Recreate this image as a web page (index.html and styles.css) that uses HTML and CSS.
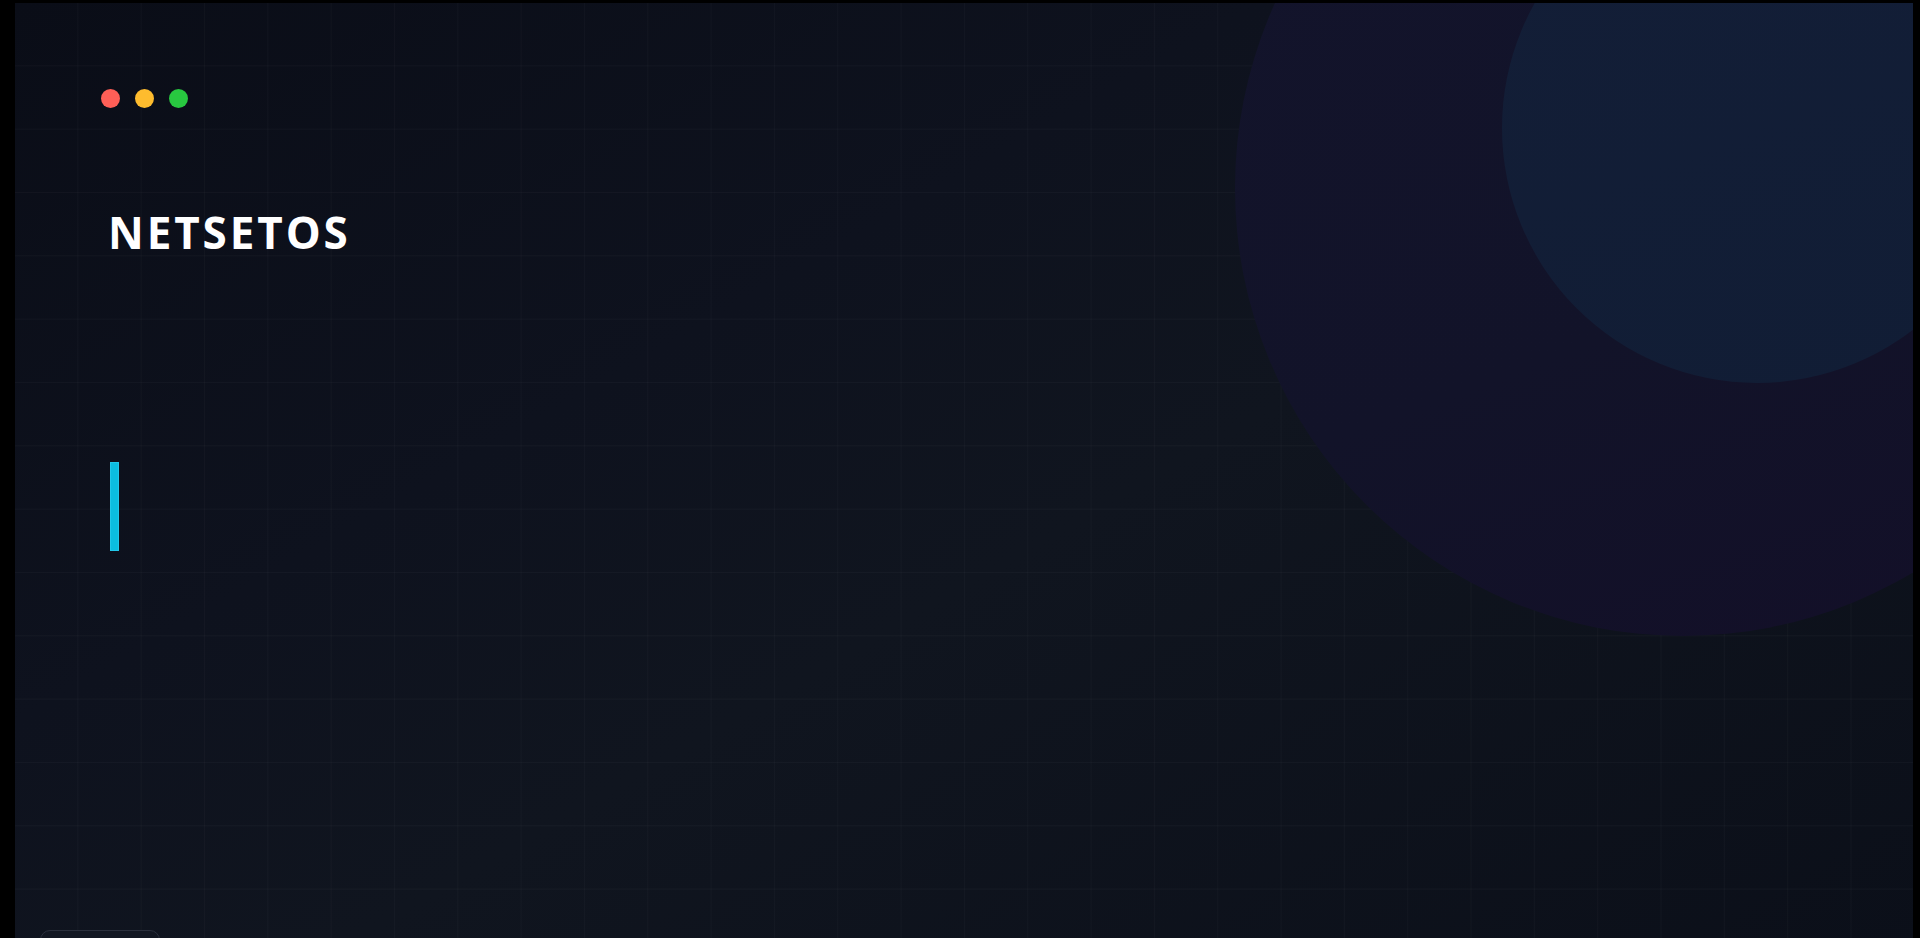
FILE: index.html
```html
<!DOCTYPE html>
<html lang="en">
<head>
<meta charset="utf-8">
<title>NETSETOS</title>
<link rel="stylesheet" href="styles.css">
</head>
<body>
<div class="frame">
  <div class="decor decor-big"></div>
  <div class="decor decor-small"></div>
  <div class="content">
    <div class="dots">
      <span class="dot dot-red"></span>
      <span class="dot dot-yellow"></span>
      <span class="dot dot-green"></span>
    </div>
    <h1 class="brand">NETSETOS</h1>
    <div class="cursor"></div>
  </div>
  <div class="footer-chip"></div>
</div>
</body>
</html>
```

FILE: styles.css
```css
html, body {
  margin: 0;
  padding: 0;
  background: #000;
  height: 100%;
  overflow: hidden;
}

.frame {
  position: relative;
  margin: 3px 7px 0 15px;
  height: 960px;
  overflow: hidden;
  background-color: #0d111c;
  background-image:
    linear-gradient(rgba(255,255,255,0.026) 1px, transparent 1px),
    linear-gradient(90deg, rgba(255,255,255,0.024) 1px, transparent 1px),
    linear-gradient(150deg, #0a0d17 0%, #0e121e 35%, #10151f 55%, #0b0f19 100%);
  background-size: 63.33px 63.33px, 63.33px 63.33px, 100% 100%;
  background-position: -1px -1px, -1px -1px, 0 0;
  font-family: "Open Sans", "Liberation Sans", sans-serif;
}

.decor {
  position: absolute;
  border-radius: 50%;
  pointer-events: none;
}

.decor-big {
  width: 896px;
  height: 896px;
  left: 1220px;
  top: -263px;
  background: linear-gradient(160deg, #13142c 0%, #121329 60%, #130f28 100%);
}

.decor-small {
  width: 510px;
  height: 510px;
  left: 1487px;
  top: -130px;
  background: linear-gradient(160deg, #131e37 0%, #111d35 100%);
}

.content {
  position: relative;
  display: flex;
  flex-direction: column;
  align-items: flex-start;
  padding: 86px 0 0 86px;
}

.dots {
  display: flex;
  gap: 15px;
}

.dot {
  width: 19px;
  height: 19px;
  border-radius: 50%;
}

.dot-red { background: #ff5f57; }
.dot-yellow { background: #febc2e; }
.dot-green { background: #28c840; }

.brand {
  margin: 94px 0 0 7px;
  font-size: 44px;
  font-weight: 700;
  line-height: 60px;
  letter-spacing: 2.9px;
  color: #ffffff;
}

.cursor {
  margin: 200px 0 0 9px;
  width: 9px;
  height: 89px;
  background: #0bbde0;
  box-shadow: inset 0 0 0 1px #22c8ea;
}

.footer-chip {
  position: absolute;
  left: 25px;
  top: 927px;
  width: 118px;
  height: 40px;
  border-radius: 10px;
  border: 1px solid #2a2f3c;
  background: #121722;
}
```
